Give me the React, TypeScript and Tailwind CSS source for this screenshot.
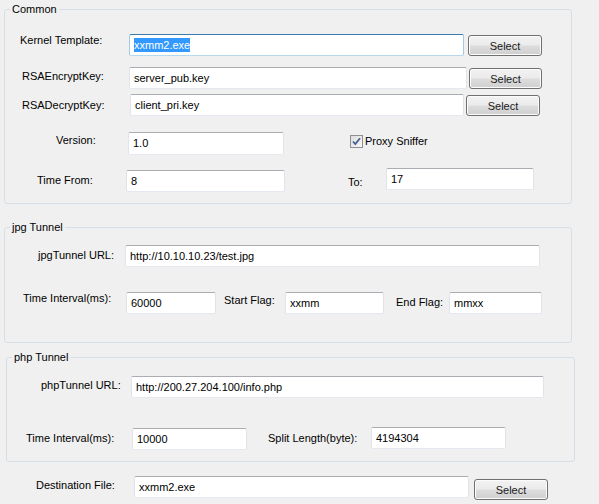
import React from 'react';

// Win7-style text box; `selected` shows the focused, highlighted value
function TextBox({ value, className = '', selected = false }: { value: string; className?: string; selected?: boolean }) {
  return (
    <div
      className={`h-[22px] flex items-center pl-[4px] bg-white border rounded-[2px] whitespace-nowrap overflow-hidden ${
        selected
          ? 'border-t-[#3d7bad] border-x-[#a4c9e3] border-b-[#b7d9ed]'
          : 'border-t-[#abadb3] border-x-[#e2e3ea] border-b-[#e3e9ef]'
      } ${className}`}
    >
      {selected ? <span className="bg-[#3399ff] text-white leading-[14px]">{value}</span> : value}
    </div>
  );
}

function SelectButton({ className = '' }: { className?: string }) {
  return (
    <button className={`h-[21px] border border-[#707070] rounded-[3px] bg-[linear-gradient(#f2f2f2_0%,#ebebeb_48%,#dddddd_52%,#cfcfcf_100%)] shadow-[inset_0_0_0_1px_#fcfcfc] text-[#1a1a1a] leading-none pt-[1px] ${className}`}>
      Select
    </button>
  );
}

function Label({ text, className = '' }: { text: string; className?: string }) {
  return <span className={`leading-[13px] whitespace-nowrap ${className}`}>{text}</span>;
}

function Group({ title, className = '', children }: { title: string; className?: string; children: React.ReactNode }) {
  return (
    <fieldset className={`border border-[#d5dfe5] rounded-[3px] ${className}`}>
      <legend className="ml-[5px] px-[2px] leading-[14px]">{title}</legend>
      {children}
    </fieldset>
  );
}

export default function App() {
  return (
    <div className="w-[599px] h-[504px] bg-[#f0f0f0] text-black text-[11px] font-['Liberation_Sans',Arial,sans-serif] flex flex-col overflow-hidden">
      {/* Common */}
      <Group title="Common" className="mt-[2px] ml-[4px] w-[568px] pb-[11px]">
        <div className="flex items-start mt-[18px]">
          <Label text="Kernel Template:" className="ml-[15px] w-[109px]" />
          <TextBox value="xxmm2.exe" selected className="w-[335px]" />
          <SelectButton className="ml-[4px] w-[74px] mt-[1px]" />
        </div>
        <div className="flex items-start mt-[11px]">
          <Label text="RSAEncryptKey:" className="ml-[17px] w-[107px] mt-[3px]" />
          <TextBox value="server_pub.key" className="w-[338px]" />
          <SelectButton className="ml-[2px] w-[73px] mt-[1px]" />
        </div>
        <div className="flex items-start mt-[5px]">
          <Label text="RSADecryptKey:" className="ml-[17px] w-[108px] mt-[5px]" />
          <TextBox value="client_pri.key" className="w-[334px]" />
          <SelectButton className="ml-[2px] w-[74px] mt-[1px]" />
        </div>
        <div className="flex items-start mt-[16px]">
          <Label text="Version:" className="ml-[51px] w-[72px] mt-[2px]" />
          <TextBox value="1.0" className="w-[156px] h-[23px]" />
          <div className="ml-[66px] mt-[3px] w-[13px] h-[13px] border border-[#8e8f8f] bg-[linear-gradient(135deg,#dcdcdc,#f8f8f8)] flex items-center justify-center">
            <svg width="11" height="11" viewBox="0 0 11 11">
              <path d="M2 5.5 L4.3 8 L9 2.2" fill="none" stroke="#4a5f97" strokeWidth="1.8" />
            </svg>
          </div>
          <Label text="Proxy Sniffer" className="ml-[2px] mt-[3px]" />
        </div>
        <div className="flex items-start mt-[13px]">
          <Label text="Time From:" className="ml-[32px] w-[89px] mt-[6px]" />
          <TextBox value="8" className="w-[159px] mt-[2px]" />
          <Label text="To:" className="ml-[63px] w-[38px] mt-[8px]" />
          <TextBox value="17" className="w-[148px]" />
        </div>
      </Group>

      {/* jpg Tunnel */}
      <Group title="jpg Tunnel" className="mt-[16px] ml-[4px] w-[568px] pb-[28px]">
        <div className="flex items-start mt-[11px]">
          <Label text="jpgTunnel URL:" className="ml-[33px] w-[87px] mt-[4px]" />
          <TextBox value="http://10.10.10.23/test.jpg" className="w-[415px]" />
        </div>
        <div className="flex items-start mt-[25px]">
          <Label text="Time Interval(ms):" className="ml-[18px] w-[103px]" />
          <TextBox value="60000" className="w-[90px]" />
          <Label text="Start Flag:" className="ml-[8px] w-[61px] mt-[2px]" />
          <TextBox value="xxmm" className="w-[99px]" />
          <Label text="End Flag:" className="ml-[12px] w-[53px] mt-[4px]" />
          <TextBox value="mmxx" className="w-[93px]" />
        </div>
      </Group>

      {/* php Tunnel */}
      <Group title="php Tunnel" className="mt-[7px] ml-[6px] w-[569px] pb-[11px]">
        <div className="flex items-start mt-[12px]">
          <Label text="phpTunnel URL:" className="ml-[34px] w-[90px] mt-[3px]" />
          <TextBox value="http://200.27.204.100/info.php" className="w-[413px]" />
        </div>
        <div className="flex items-start mt-[29px]">
          <Label text="Time Interval(ms):" className="ml-[19px] w-[106px] mt-[5px]" />
          <TextBox value="10000" className="w-[115px] mt-[1px]" />
          <Label text="Split Length(byte):" className="ml-[21px] w-[103px] mt-[5px]" />
          <TextBox value="4194304" className="w-[135px]" />
        </div>
      </Group>

      {/* Destination */}
      <div className="flex items-start mt-[14px]">
        <Label text="Destination File:" className="ml-[36px] w-[98px] mt-[3px]" />
        <TextBox value="xxmm2.exe" className="w-[335px]" />
        <SelectButton className="ml-[5px] w-[74px] mt-[3px]" />
      </div>
    </div>
  );
}
